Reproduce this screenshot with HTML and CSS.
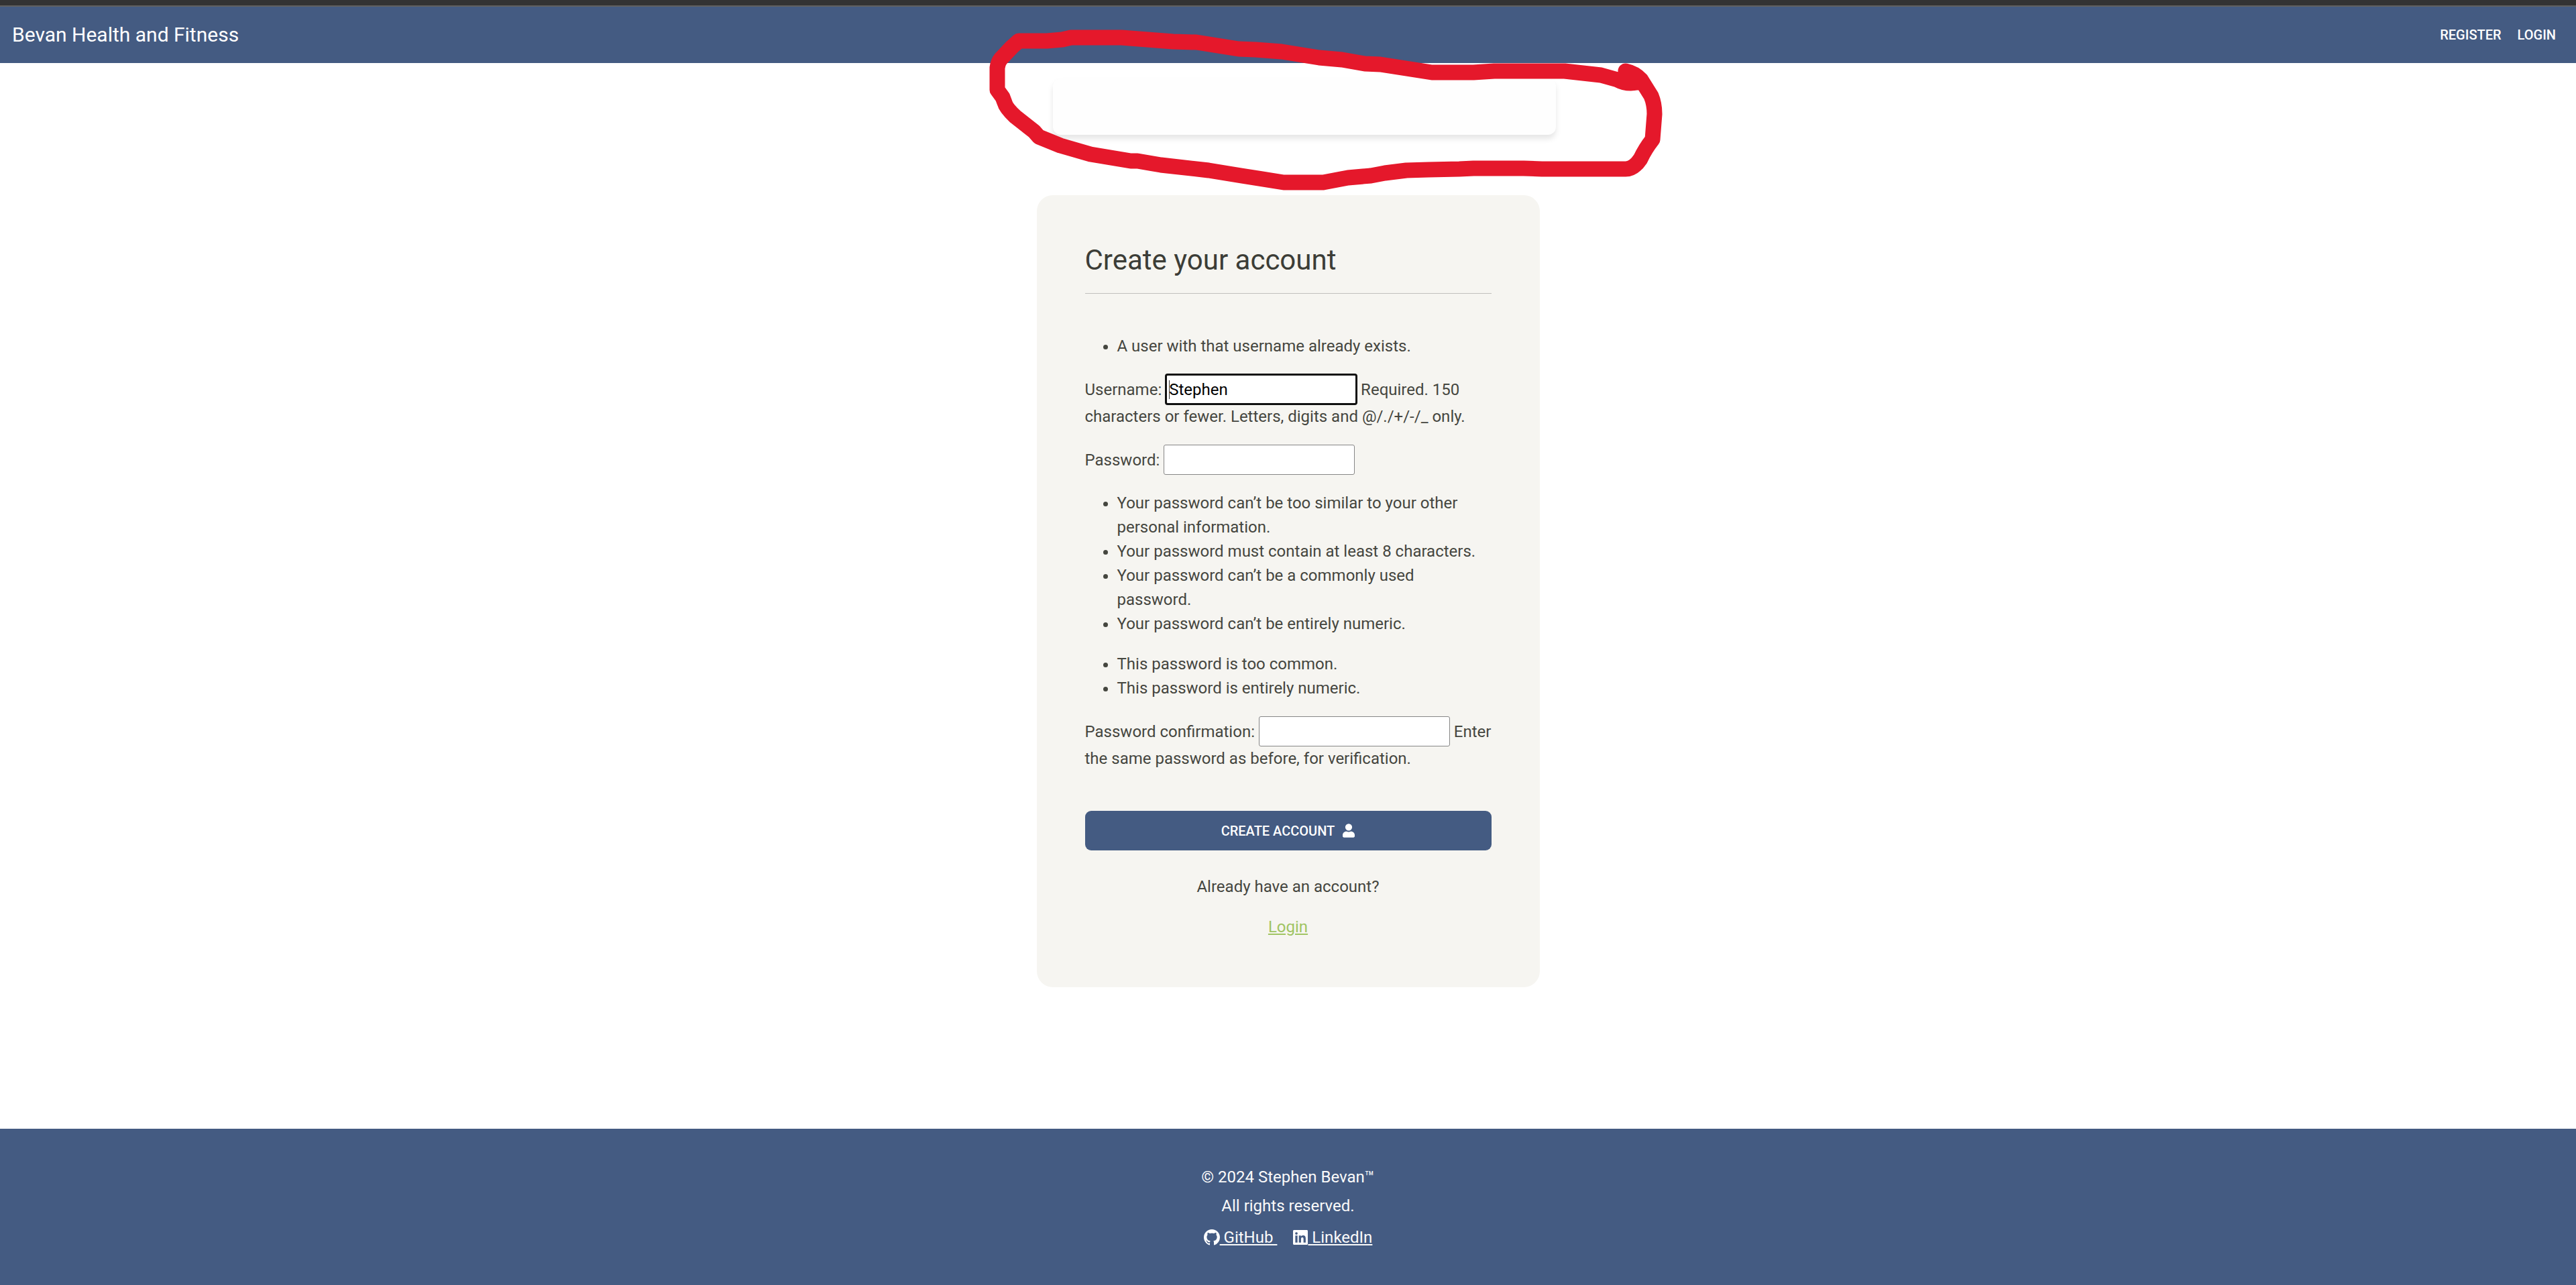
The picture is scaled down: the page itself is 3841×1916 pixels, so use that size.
FILE: index.html
```html
<!DOCTYPE html>
<html lang="en">
<head>
<meta charset="utf-8">
<meta name="viewport" content="width=device-width, initial-scale=1">
<title>Bevan Health and Fitness</title>
<link rel="stylesheet" href="styles.css">
</head>
<body>
<header class="navbar">
  <a class="brand" href="#">Bevan Health and Fitness</a>
  <nav class="nav-links">
    <a href="#">REGISTER</a>
    <a href="#">LOGIN</a>
  </nav>
</header>
<main class="main">
  <div class="messages"><div class="alert" role="alert"></div></div>
  <section class="card">
    <h1>Create your account</h1>
    <hr>
    <form>
      <ul>
        <li>A user with that username already exists.</li>
      </ul>
      <p><label for="username">Username:</label> <input class="active" type="text" id="username" value="Stephen"> Required. 150 characters or fewer. Letters, digits and @/./+/-/_ only.</p>
      <p><label for="password1">Password:</label> <input type="password" id="password1"></p>
      <ul>
        <li>Your password can’t be too similar to your other personal information.</li>
        <li>Your password must contain at least 8 characters.</li>
        <li>Your password can’t be a commonly used password.</li>
        <li>Your password can’t be entirely numeric.</li>
      </ul>
      <ul>
        <li>This password is too common.</li>
        <li>This password is entirely numeric.</li>
      </ul>
      <p><label for="password2">Password confirmation:</label> <input type="password" id="password2"> Enter the same password as before, for verification.</p>
      <button type="submit">CREATE ACCOUNT
        <svg viewBox="0 0 448 512" aria-hidden="true"><path d="M224 256A128 128 0 1 0 224 0a128 128 0 1 0 0 256zM313.600 288h-16.700c-22.200 10.200-46.900 16-72.900 16s-50.600-5.800-72.900-16h-16.700C60.200 288 0 348.200 0 422.400V464c0 26.500 21.500 48 48 48h352c26.500 0 48-21.500 48-48v-41.600c0-74.200-60.200-134.400-134.400-134.400z"/></svg>
      </button>
    </form>
    <div class="login">
      <p>Already have an account?</p>
      <p><a href="#">Login</a></p>
    </div>
  </section>
</main>
<footer class="footer">
  <p>© 2024 Stephen Bevan™</p>
  <p>All rights reserved.</p>
  <div class="social">
    <a href="#"><svg class="github" viewBox="0 0 16 16" aria-hidden="true"><path d="M8 0C3.580 0 0 3.580 0 8c0 3.540 2.290 6.530 5.470 7.590.4.070.55-.17.55-.38 0-.19-.01-.82-.01-1.490-2.010.37-2.530-.49-2.690-.94-.09-.23-.48-.94-.82-1.130-.28-.15-.68-.52-.01-.53.63-.01 1.080.58 1.230.82.72 1.210 1.870.87 2.330.66.07-.52.28-.87.51-1.070-1.780-.2-3.640-.89-3.640-3.950 0-.87.31-1.590.82-2.150-.08-.2-.36-1.020.08-2.120 0 0 .67-.21 2.200.82.64-.18 1.320-.27 2-.27s1.360.09 2 .27c1.530-1.040 2.200-.82 2.200-.82.44 1.100.16 1.920.08 2.120.51.56.82 1.270.82 2.150 0 3.070-1.870 3.750-3.650 3.950.29.25.54.73.54 1.480 0 1.070-.01 1.930-.01 2.200 0 .21.15.46.55.38A8.010 8.010 0 0 0 16 8c0-4.420-3.580-8-8-8z"/></svg><span>&nbsp;GitHub&nbsp;</span></a>
    <a href="#"><svg class="linkedin" viewBox="0 0 448 448" aria-hidden="true"><path fill-rule="evenodd" d="M416 0H31.900C14.300 0 0 14.500 0 32.300v383.400C0 433.500 14.300 448 31.900 448H416c17.600 0 32-14.500 32-32.300V32.300C448 14.500 433.600 0 416 0zM135.400 384H69V170.200h66.500V384zM102.200 141a38.500 38.500 0 1 1 0-77 38.500 38.500 0 0 1 0 77zM384.300 384h-66.400V280c0-24.800-.5-56.700-34.500-56.700-34.600 0-39.900 27-39.900 54.900V384h-66.400V170.200h63.700v29.200h.9c8.900-16.800 30.600-34.500 62.900-34.500 67.200 0 79.700 44.300 79.700 101.900z"/></svg><span>&nbsp;LinkedIn</span></a>
  </div>
</footer>
<svg class="scribble" viewBox="1460 30 1030 260" aria-hidden="true">
  <path d="M1518 61 L1560 61 L1583 59 L1596 56 L1671 56 L1748 62 L1783 63 L1846 73 L1871 74 L1910 77 L1966 86 L2000 89 L2034 95 L2057 96 L2134 108 L2196 108 L2227 106 L2332 106 L2386 112 L2411 119 Q2424 126 2440 123 L2423 106 Q2437 109 2446 119 L2461 143 Q2466 155 2466 170 L2463 208 Q2452 222 2445 237 Q2435 252 2423 252 L2298 252 L2271 251 L2196 251 L2175 252 L2129 253 L2096 254 L2064 258 L2043 262 L2009 265 L1972 272 L1913 272 L1850 262 L1801 254 L1730 246 L1695 240 L1685 240 L1625 230 L1580 217 L1548 204 L1541 196 L1513 174 Q1499 161 1497 153 L1494 145 L1486 134 L1486 101 Q1487 93 1491 88 L1508 70 Z"/>
</svg>
</body>
</html>
```
FILE: styles.css
```css
* {
  box-sizing: border-box;
}

body {
  display: flex;
  flex-direction: column;
  min-height: 100vh;
  position: relative;
  margin: 0;
  background: #fff;
  color: #45463f;
  font: 24px/36px Roboto, sans-serif;
}

p,
ul {
  margin: 0 0 24px;
}

ul {
  padding-left: 48px;
}

.navbar {
  display: flex;
  justify-content: space-between;
  align-items: center;
  height: 94px;
  padding: 2px 30px 0 18px;
  border-top: 8px solid #333;
  box-shadow: inset 0 2px #606060;
  background: #445b82;
}

.navbar a {
  color: #fff;
  text-decoration: none;
}

.brand {
  font-size: 30px;
}

.nav-links {
  display: flex;
  gap: 24px;
  font-size: 20px;
  font-weight: 500;
}

.main {
  flex: 1;
  width: 100%;
  max-width: 750px;
  margin: 0 auto;
}

.messages {
  padding: 23px 0 90px;
}

.alert {
  width: 100%;
  height: 84px;
  margin-left: 24px;
  border-radius: 12px;
  background: #fefefe;
  box-shadow: 0 6px 9px rgba(0, 0, 0, 0.1);
}

.card {
  padding: 72px;
  border-radius: 24px;
  background: #f6f5f1;
}

h1 {
  margin: 0 0 24px;
  color: #3c3d37;
  font-size: 42px;
  font-weight: 400;
  line-height: 50px;
}

hr {
  height: 1px;
  margin: 0 0 60px;
  border: 0;
  background: #c0c0bd;
}

input {
  width: 285px;
  height: 45px;
  padding: 0 4px;
  border: 1px solid #868686;
  border-radius: 3px;
  background: #fff;
  color: #000;
  font: 24px Roboto, sans-serif;
}

input.active {
  outline: 3px solid #101010;
  outline-offset: -2px;
  background: linear-gradient(#333, #333) 4px center / 1px 28px no-repeat #fff;
}

button {
  display: flex;
  justify-content: center;
  align-items: center;
  gap: 12px;
  width: 100%;
  height: 59px;
  margin: 60px 0 36px;
  border: 0;
  border-radius: 9px;
  background: #445b82;
  color: #fff;
  font: 500 20px Roboto, sans-serif;
}

button svg {
  width: 18px;
  height: 21px;
  fill: #fff;
}

.login {
  text-align: center;
}

.login p:last-child {
  margin: 0;
}

.login a {
  color: #a0c463;
}

.footer {
  display: flex;
  flex-direction: column;
  align-items: center;
  gap: 7px;
  padding: 54px 0 53px;
  background: #445b82;
  color: #fafafa;
}

.footer p {
  margin: 0;
}

.social {
  display: flex;
  gap: 24px;
  padding-top: 4px;
}

.social a {
  display: flex;
  align-items: center;
  color: #fafafa;
  text-decoration: none;
}

.social span {
  text-decoration: underline;
}

.social svg {
  height: 24px;
  fill: #fff;
}

.github {
  width: 24px;
}

.social .linkedin {
  width: 22px;
  height: 22px;
}

.scribble {
  position: absolute;
  top: 30px;
  left: calc(50% - 460px);
  width: 1030px;
  height: 260px;
  fill: none;
  stroke: #e5182b;
  stroke-width: 23px;
  stroke-linejoin: round;
  pointer-events: none;
}
```
